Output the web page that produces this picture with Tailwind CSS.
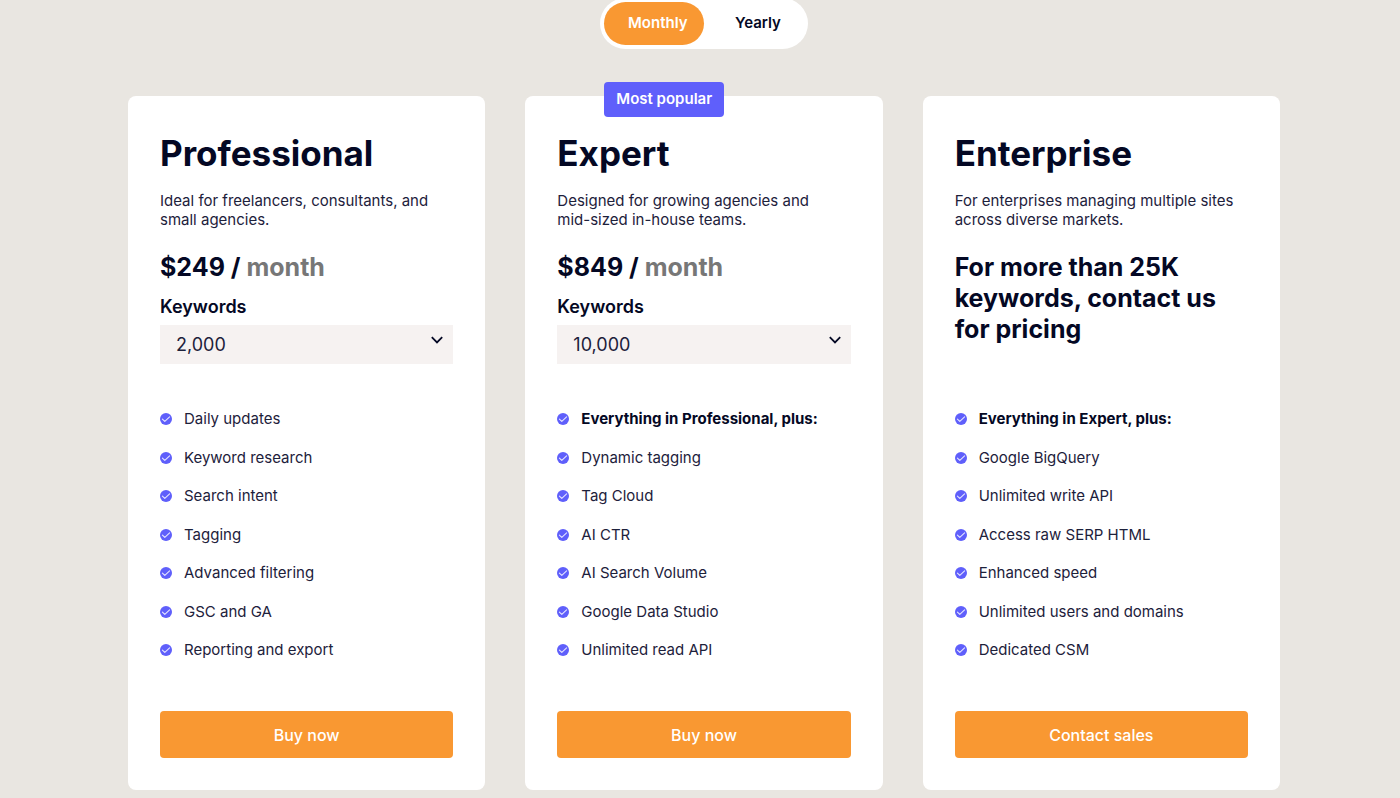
<!DOCTYPE html>
<html lang="en">
<head>
<meta charset="utf-8">
<meta name="viewport" content="width=device-width, initial-scale=1">
<title>Pricing</title>
<script src="https://cdn.jsdelivr.net/npm/@tailwindcss/browser@4"></script>
</head>
<body class="min-h-screen bg-[#e9e6e1] pl-2 font-['Inter',sans-serif] text-[#040824] antialiased">
<svg class="hidden" aria-hidden="true">
  <symbol id="check" viewBox="0 0 12 12"><circle cx="6" cy="6" r="6" fill="#5f5ffb"/><path d="M2.4 6.2 L4.8 8.4 L9.6 3.9" fill="none" stroke="#e6e6ff" stroke-width="1.1" stroke-linecap="round" stroke-linejoin="round"/></symbol>
  <symbol id="chevron" viewBox="0 0 12 8"><path d="M0.8 1.2 L6 6.4 L11.2 1.2" fill="none" stroke="#040824" stroke-width="1.8" stroke-linejoin="miter"/></symbol>
</svg>
<main class="mx-auto max-w-6xl pb-2">
  <fieldset aria-label="Billing period" class="mx-auto -mt-0.5 flex w-52 rounded-full bg-white p-1 text-[15px] font-semibold">
    <label class="flex h-[43px] w-25 cursor-pointer items-center rounded-full pl-6 has-checked:bg-[#f99832] has-checked:text-white"><input type="radio" name="billing" class="sr-only" checked>Monthly</label>
    <label class="flex h-[43px] w-25 cursor-pointer items-center rounded-full pl-[31px] has-checked:bg-[#f99832] has-checked:text-white"><input type="radio" name="billing" class="sr-only">Yearly</label>
  </fieldset>

  <div class="mt-[47px] grid grid-cols-3 gap-10">
    <section class="flex min-h-[694px] flex-col rounded-lg bg-white p-8">
      <div class="min-h-70">
        <h2 class="text-[35px] leading-[50px] font-bold">Professional</h2>
        <p class="mt-[13px] text-[15px] leading-[19px] text-[#1d213b]">Ideal for freelancers, consultants, and small agencies.</p>
        <p class="mt-[23px] text-[25px] leading-[31px] font-bold">$249 / <span class="text-[#777]">month</span></p>
        <label for="kw-pro" class="mt-3 block text-lg leading-6 font-semibold">Keywords</label>
        <div class="relative mt-1.5">
          <select id="kw-pro" class="h-[39px] w-full appearance-none bg-[#f6f2f1] pl-4 text-lg text-[#1d213b]"><option>2,000</option></select>
          <svg class="pointer-events-none absolute top-[11px] right-2.5 h-2 w-3"><use href="#chevron"/></svg>
        </div>
      </div>
      <ul class="flex flex-1 flex-col justify-between text-[15px] leading-[22px] text-[#1d213b]">
        <li class="flex items-center gap-3"><svg class="size-3"><use href="#check"/></svg>Daily updates</li>
        <li class="flex items-center gap-3"><svg class="size-3"><use href="#check"/></svg>Keyword research</li>
        <li class="flex items-center gap-3"><svg class="size-3"><use href="#check"/></svg>Search intent</li>
        <li class="flex items-center gap-3"><svg class="size-3"><use href="#check"/></svg>Tagging</li>
        <li class="flex items-center gap-3"><svg class="size-3"><use href="#check"/></svg>Advanced filtering</li>
        <li class="flex items-center gap-3"><svg class="size-3"><use href="#check"/></svg>GSC and GA</li>
        <li class="flex items-center gap-3"><svg class="size-3"><use href="#check"/></svg>Reporting and export</li>
      </ul>
      <button type="button" class="mt-[50px] h-[47px] rounded bg-[#f99832] text-base font-medium text-white">Buy now</button>
    </section>

    <section class="relative flex min-h-[694px] flex-col rounded-lg bg-white p-8">
      <span class="absolute -top-3.5 left-[79px] flex h-[35px] items-center rounded bg-[#5f5ffb] px-3 text-[15px] font-semibold text-white">Most popular</span>
      <div class="min-h-70">
        <h2 class="text-[35px] leading-[50px] font-bold">Expert</h2>
        <p class="mt-[13px] text-[15px] leading-[19px] text-[#1d213b]">Designed for growing agencies and<br>mid-sized in-house teams.</p>
        <p class="mt-[23px] text-[25px] leading-[31px] font-bold">$849 / <span class="text-[#777]">month</span></p>
        <label for="kw-exp" class="mt-3 block text-lg leading-6 font-semibold">Keywords</label>
        <div class="relative mt-1.5">
          <select id="kw-exp" class="h-[39px] w-full appearance-none bg-[#f6f2f1] pl-4 text-lg text-[#1d213b]"><option>10,000</option></select>
          <svg class="pointer-events-none absolute top-[11px] right-2.5 h-2 w-3"><use href="#chevron"/></svg>
        </div>
      </div>
      <ul class="flex flex-1 flex-col justify-between text-[15px] leading-[22px] text-[#1d213b]">
        <li class="flex items-center gap-3 font-bold text-[#040824]"><svg class="size-3"><use href="#check"/></svg>Everything in Professional, plus:</li>
        <li class="flex items-center gap-3"><svg class="size-3"><use href="#check"/></svg>Dynamic tagging</li>
        <li class="flex items-center gap-3"><svg class="size-3"><use href="#check"/></svg>Tag Cloud</li>
        <li class="flex items-center gap-3"><svg class="size-3"><use href="#check"/></svg>AI CTR</li>
        <li class="flex items-center gap-3"><svg class="size-3"><use href="#check"/></svg>AI Search Volume</li>
        <li class="flex items-center gap-3"><svg class="size-3"><use href="#check"/></svg>Google Data Studio</li>
        <li class="flex items-center gap-3"><svg class="size-3"><use href="#check"/></svg>Unlimited read API</li>
      </ul>
      <button type="button" class="mt-[50px] h-[47px] rounded bg-[#f99832] text-base font-medium text-white">Buy now</button>
    </section>

    <section class="flex min-h-[694px] flex-col rounded-lg bg-white p-8">
      <div class="min-h-70">
        <h2 class="text-[35px] leading-[50px] font-bold">Enterprise</h2>
        <p class="mt-[13px] text-[15px] leading-[19px] text-[#1d213b]">For enterprises managing multiple sites across diverse markets.</p>
        <p class="mt-[23px] text-[25px] leading-[31px] font-bold">For more than 25K<br>keywords, contact us<br>for pricing</p>
      </div>
      <ul class="flex flex-1 flex-col justify-between text-[15px] leading-[22px] text-[#1d213b]">
        <li class="flex items-center gap-3 font-bold text-[#040824]"><svg class="size-3"><use href="#check"/></svg>Everything in Expert, plus:</li>
        <li class="flex items-center gap-3"><svg class="size-3"><use href="#check"/></svg>Google BigQuery</li>
        <li class="flex items-center gap-3"><svg class="size-3"><use href="#check"/></svg>Unlimited write API</li>
        <li class="flex items-center gap-3"><svg class="size-3"><use href="#check"/></svg>Access raw SERP HTML</li>
        <li class="flex items-center gap-3"><svg class="size-3"><use href="#check"/></svg>Enhanced speed</li>
        <li class="flex items-center gap-3"><svg class="size-3"><use href="#check"/></svg>Unlimited users and domains</li>
        <li class="flex items-center gap-3"><svg class="size-3"><use href="#check"/></svg>Dedicated CSM</li>
      </ul>
      <button type="button" class="mt-[50px] h-[47px] rounded bg-[#f99832] text-base font-medium text-white">Contact sales</button>
    </section>
  </div>
</main>
</body>
</html>
